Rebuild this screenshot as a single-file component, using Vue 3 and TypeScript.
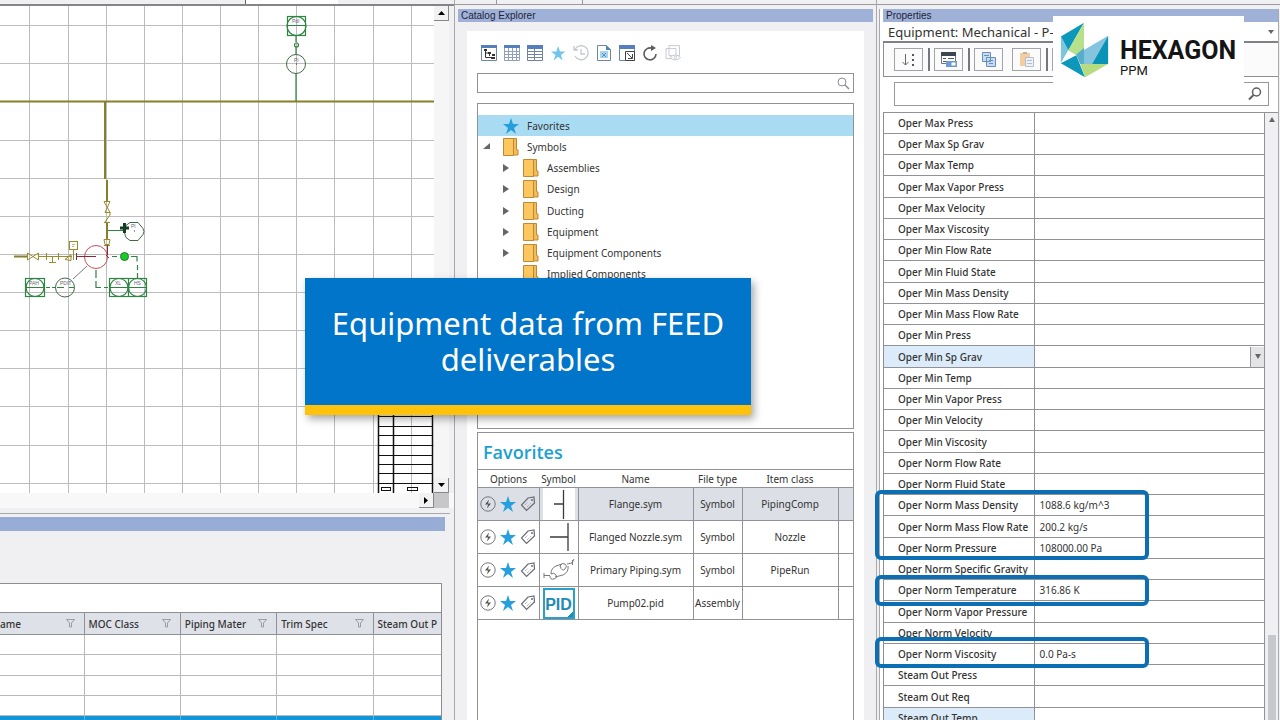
<script setup lang="ts">
interface PropertyRow {
  name: string
  value?: string
  state?: 'active' | 'tinted'
}

interface FavoriteRow {
  name: string
  type: string
  itemClass: string
  glyph: 'flange' | 'nozzle' | 'pipe' | 'pid'
}

const properties: PropertyRow[] = [
  { name: 'Oper Max Press' },
  { name: 'Oper Max Sp Grav' },
  { name: 'Oper Max Temp' },
  { name: 'Oper Max Vapor Press' },
  { name: 'Oper Max Velocity' },
  { name: 'Oper Max Viscosity' },
  { name: 'Oper Min Flow Rate' },
  { name: 'Oper Min Fluid State' },
  { name: 'Oper Min Mass Density' },
  { name: 'Oper Min Mass Flow Rate' },
  { name: 'Oper Min Press' },
  { name: 'Oper Min Sp Grav', state: 'active' },
  { name: 'Oper Min Temp' },
  { name: 'Oper Min Vapor Press' },
  { name: 'Oper Min Velocity' },
  { name: 'Oper Min Viscosity' },
  { name: 'Oper Norm Flow Rate' },
  { name: 'Oper Norm Fluid State' },
  { name: 'Oper Norm Mass Density', value: '1088.6 kg/m^3' },
  { name: 'Oper Norm Mass Flow Rate', value: '200.2 kg/s' },
  { name: 'Oper Norm Pressure', value: '108000.00 Pa' },
  { name: 'Oper Norm Specific Gravity' },
  { name: 'Oper Norm Temperature', value: '316.86 K' },
  { name: 'Oper Norm Vapor Pressure' },
  { name: 'Oper Norm Velocity' },
  { name: 'Oper Norm Viscosity', value: '0.0 Pa-s' },
  { name: 'Steam Out Press' },
  { name: 'Steam Out Req' },
  { name: 'Steam Out Temp', state: 'tinted' },
]

const folders = ['Assemblies', 'Design', 'Ducting', 'Equipment', 'Equipment Components', 'Implied Components']

const favorites: FavoriteRow[] = [
  { name: 'Flange.sym', type: 'Symbol', itemClass: 'PipingComp', glyph: 'flange' },
  { name: 'Flanged Nozzle.sym', type: 'Symbol', itemClass: 'Nozzle', glyph: 'nozzle' },
  { name: 'Primary Piping.sym', type: 'Symbol', itemClass: 'PipeRun', glyph: 'pipe' },
  { name: 'Pump02.pid', type: 'Assembly', itemClass: '', glyph: 'pid' },
]

const gridColumns = ['ame', 'MOC Class', 'Piping Mater', 'Trim Spec', 'Steam Out P']
const gridX = [29, 68, 106, 144, 182, 220, 258, 296, 334, 373, 411]
const gridY = [26, 64, 141, 179, 217, 255, 293, 331, 369, 407, 446, 484]
const titleBlockY = [417, 427, 436, 446, 456, 465, 474, 484]
const starPath = 'M8 0l2 6h6l-5 4 2 6-5-4-5 4 2-6-5-4h6z'
</script>

<template>
  <div class="app">
    <main class="workspace">
      <section class="left">
        <div class="strip left-strip"><span class="strip-tab"></span></div>
        <div class="drawing">
          <svg class="canvas" viewBox="0 6 434 487" preserveAspectRatio="xMinYMin slice" role="img" aria-label="Piping diagram">
            <rect y="6" width="434" height="487" fill="#fff" />
            <g stroke="#bdbdbd" stroke-width="1">
              <line v-for="x in gridX" :key="'x' + x" :x1="x + 0.5" :x2="x + 0.5" y1="6" y2="493" />
              <line v-for="y in gridY" :key="'y' + y" x1="0" x2="434" :y1="y - 0.5" :y2="y - 0.5" />
            </g>
            <g stroke="#85802a" stroke-width="2" fill="none">
              <path d="M0 101.500H434M105 102V179M107 180V201M107 223V239M14 256.500H27" />
            </g>
            <g stroke="#9a8b2c" stroke-width="1" fill="none">
              <path d="M104 201.500h6l-5 11h5zM110 212v3l-5 7M104 222.500h6M104 239.500h6l-1 5h-4zM104 245.500h6" />
              <path d="M27.500 253l11 7v-7l-11 7zM39 256.500h7M46.500 253v7M46 256.500h12M52.500 257v5M49 262.500h7M58.500 253v7M59 256.500h13M65 259.500l6-5v6zM73.500 249v11" />
              <rect x="69.500" y="241.500" width="8" height="8" />
              <path d="M72 244.500h3M72 246.500h2" stroke-width=".6" />
            </g>
            <g stroke="#c0505a" fill="none">
              <circle cx="96" cy="257" r="11.500" />
              <path d="M76.500 253v7M76 256.500h20M107.500 245v10M106 255l3 3" stroke="#8d2638" />
            </g>
            <g stroke="#2f8443" fill="none" stroke-width="1.200">
              <rect x="287.500" y="16.500" width="18" height="19" />
              <circle cx="296.500" cy="26" r="9.500" />
              <path d="M287 25.500h19M296 35v7M296 47v7M296 73v28" />
              <circle cx="296.500" cy="45" r="2" />
              <circle cx="296" cy="64" r="9.500" stroke="#426a4a" stroke-width="1" />
              <rect x="25.500" y="278.500" width="19" height="18" />
              <circle cx="35" cy="287.500" r="9" />
              <circle cx="65" cy="287.500" r="9.500" stroke="#426a4a" stroke-width="1" />
              <path d="M26 287.500h18M46 287.500h4M52 287.500h4M57 287.500h7M69 287.500h5" />
              <path d="M73 279l14-13" stroke-width=".8" stroke="#555" />
              <path d="M96 270v8M96 281v6.500h5M104 287.500h4M112 256.500h5M131 256.500h6v5M137.500 265v5M137.500 273v5" />
              <rect x="109.500" y="278.500" width="37" height="18" />
              <circle cx="119" cy="287.500" r="9" />
              <circle cx="137.500" cy="287.500" r="9" />
              <path d="M128.500 278v18M110 287.500h37M108 230.500h16" />
              <path d="M124 231.500l2-6 4-3h8l5 6 1 3-1 3-5 6h-8l-4-3z" stroke="#426a4a" stroke-width="1" />
            </g>
            <circle cx="124.500" cy="256.500" r="4" fill="#19cb29" stroke="#1f7d2a" />
            <path d="M124.500 223v10M120 228h9" stroke="#143d24" stroke-width="3" />
            <path d="M296 64h1M134 231h1" stroke="#333" />
            <g class="tag-text">
              <text x="292" y="23">PdI</text><text x="294" y="62">PI</text>
              <text x="29" y="285">PAH</text><text x="60" y="285">PDIT</text>
              <text x="115" y="285">XL</text><text x="134" y="285">HS</text><text x="131" y="228">PI</text>
            </g>
            <g stroke="#111" stroke-width="1" fill="none">
              <path d="M378.500 410V493M393.500 410V493M432.500 410V493" stroke-width="1.500" />
              <line v-for="y in titleBlockY" :key="y" x1="378" x2="433" :y1="y - 0.5" :y2="y - 0.5" />
              <rect x="381.500" y="487.500" width="9" height="3" />
              <rect x="407.500" y="487.500" width="10" height="3" />
            </g>
          </svg>
          <div class="vscroll">
            <button class="sb" aria-label="Scroll up"><svg width="7" height="4"><path d="M0 4h7L3.500 0z" /></svg></button>
            <button class="sb" aria-label="Scroll down"><svg width="7" height="4"><path d="M0 0h7L3.500 4z" /></svg></button>
          </div>
        </div>
        <div class="hscroll">
          <button class="sb" aria-label="Scroll right"><svg width="4" height="7"><path d="M0 0v7l4-3.500z" /></svg></button>
          <span class="corner"></span>
        </div>
        <div class="editor">
          <div class="bar"></div>
          <div class="sheet">
            <div class="group-area"></div>
            <table>
              <thead>
                <tr>
                  <th v-for="(c, i) in gridColumns" :key="c">
                    <div class="th-in">
                      <span>{{ c }}</span>
                      <svg v-if="i < 4" width="9" height="9" viewBox="0 0 9 9"><path d="M.500.500h8L5.500 4v4h-2V4z" fill="none" stroke="#9a9ca3" /></svg>
                    </div>
                  </th>
                </tr>
              </thead>
              <tbody>
                <tr v-for="r in 5" :key="r" :class="{ chosen: r === 5 }"><td v-for="c in gridColumns" :key="c"></td></tr>
              </tbody>
            </table>
          </div>
        </div>
      </section>

      <section class="catalog">
        <div class="strip catalog-strip"><span></span><span></span></div>
        <h2 class="title">Catalog Explorer</h2>
        <div class="catalog-body">
          <div class="tools">
            <button aria-label="Tree view"><svg viewBox="0 0 16 16"><path d="M.500.500h15v15H.500z" fill="#fff" stroke="#6b87ac" /><path d="M0 0h16v3H0z" fill="#5580bd" /><path d="M4.500 5v7.500H12M4.500 8H8M8.500 8v3" stroke="#333" fill="none" /><path d="M3 4h3v2H3zM7 7h3v2H7zM11 9h3v2h-3zM10 12h4v2h-4z" fill="#333" /></svg></button>
            <button aria-label="Grid view"><svg viewBox="0 0 16 16"><path d="M.500.500h15v15H.500zM0 6.500h16M0 9.500h16M0 12.500h16M4.500 3v13M8.500 3v13M12.500 3v13" fill="#fff" stroke="#8fa0b8" /><path d="M0 0h16v3H0z" fill="#5580bd" /></svg></button>
            <button aria-label="List view"><svg viewBox="0 0 16 16"><path d="M.500.500h15v15H.500zM0 6.500h16M0 9.500h16M0 12.500h16M7.500 3v13" fill="#fff" stroke="#718499" /><path d="M0 0h16v4H0z" fill="#5580bd" /></svg></button>
            <button aria-label="Favorites"><svg viewBox="0 0 16 16"><path :d="starPath" fill="#70c4ee" transform="translate(1 1) scale(.9)" /></svg></button>
            <button aria-label="Recent"><svg viewBox="0 0 16 16" fill="none" stroke="#c3c8ce" stroke-width="1.300"><path d="M2 4.500A7 7 0 1 1 2 11M1 1v4h4M8 4v5h4" /></svg></button>
            <button aria-label="Document"><svg viewBox="0 0 16 16"><path d="M1.500.500H10l4.500 4V15.500h-13z" fill="#fff" stroke="#6d879f" /><path d="M10 0v5h5z" fill="#4d88b5" /><path d="M4 6h8v7H4z" fill="#a7d4ef" /><path d="M6 8l4 4M10 8l-4 4" stroke="#5095c4" /></svg></button>
            <button aria-label="Dock window"><svg viewBox="0 0 16 16"><path d="M.500.500h15v15H.500z" fill="#fff" stroke="#6b87ac" /><path d="M0 0h16v4H0z" fill="#5580bd" /><path d="M6.500 6.500h9v9h-9z" fill="#fff" stroke="#444" /><path d="M8 8l5 5M13.500 9v4.500H9" stroke="#444" fill="none" /></svg></button>
            <button aria-label="Refresh"><svg viewBox="0 0 16 16"><path d="M10 3.200A6 6 0 1 0 14 9" fill="none" stroke="#5c5c5e" stroke-width="1.600" /><path d="M9 0l5 3-5 3z" fill="#5c5c5e" /></svg></button>
            <button aria-label="Preview"><svg viewBox="0 0 16 16" fill="#fff" stroke="#c6cad6"><path d="M4 .600h10.500v10H4zM1 3.600h10v10H1z" /><path d="M5 12.500q5.500-5 10.500 0-5 5-10.500 0z" /><circle cx="10.500" cy="12.500" r="1.300" /></svg></button>
          </div>
          <div class="search">
            <input type="text" aria-label="Search catalog" />
            <svg width="13" height="13" viewBox="0 0 13 13" fill="none" stroke="#8a8d92"><circle cx="5" cy="5" r="4" /><path d="M8 8l4 4" stroke-width="1.500" /></svg>
          </div>
          <ul class="tree">
            <li class="current">
              <span class="twist"></span>
              <svg class="folder" viewBox="0 0 16 16"><path :d="starPath" fill="#239fdb" /></svg>
              <span>Favorites</span>
            </li>
            <li>
              <button class="twist" aria-label="Collapse Symbols"><svg width="7" height="7"><path d="M7 0v6H0z" /></svg></button>
              <svg class="folder" viewBox="0 0 16 18"><path d="M.500.500h10v17H.500z" fill="#fcc75f" stroke="#bd8837" /><path d="M10.500.500h3v11l1.500.500v5h-4.500z" fill="#f5bc55" stroke="#bd8837" /></svg>
              <span>Symbols</span>
            </li>
            <li v-for="(f, i) in folders" :key="f" class="child">
              <button v-if="i < 5" class="twist" :aria-label="'Expand ' + f"><svg width="6" height="8"><path d="M0 0v8l6-4z" /></svg></button>
              <span v-else class="twist"></span>
              <svg class="folder" viewBox="0 0 16 18"><path d="M.500.500h10v17H.500z" fill="#fcc75f" stroke="#bd8837" /><path d="M10.500.500h3v11l1.500.500v5h-4.500z" fill="#f5bc55" stroke="#bd8837" /></svg>
              <span>{{ f }}</span>
            </li>
          </ul>
          <div class="favorites">
            <h3>Favorites</h3>
            <table>
              <colgroup><col class="c1" /><col class="c2" /><col class="c3" /><col class="c4" /><col class="c5" /><col class="c6" /></colgroup>
              <thead>
                <tr><th>Options</th><th>Symbol</th><th>Name</th><th>File type</th><th>Item class</th><th></th></tr>
              </thead>
              <tbody>
                <tr v-for="(f, i) in favorites" :key="f.name" :class="{ picked: i === 0 }">
                  <td>
                    <div class="options">
                      <button :aria-label="'Run ' + f.name"><svg viewBox="0 0 16 16"><circle cx="8" cy="8" r="7.200" fill="none" stroke="#747880" /><path d="M9 3.500L5 8.500h3l-1 4 4-5H8z" fill="#555" /></svg></button>
                      <button :aria-label="'Unfavorite ' + f.name"><svg viewBox="0 0 16 16"><path :d="starPath" fill="#279fdf" /></svg></button>
                      <button :aria-label="'Tag ' + f.name"><svg viewBox="0 0 16 16"><path d="M8 2l6-1 .5 6-8 7.500L1.500 9z" fill="none" stroke="#696c72" stroke-width="1.200" /><circle cx="12" cy="4" r="1" fill="#696c72" /><path d="M5 9l3-3M7 11l4-4" stroke="#a98f94" stroke-dasharray="1 1" /></svg></button>
                    </div>
                  </td>
                  <td class="sym">
                    <div class="symbox" :class="f.glyph">
                      <svg v-if="f.glyph === 'flange'" viewBox="0 0 32 32" stroke="#3b3b3b" stroke-width="1.300"><path d="M11 16h9M20.500 2v29" /></svg>
                      <svg v-else-if="f.glyph === 'nozzle'" viewBox="0 0 32 32" stroke="#3b3b3b" stroke-width="1.300"><path d="M7 16h18M25 2v28" /></svg>
                      <svg v-else-if="f.glyph === 'pipe'" viewBox="0 0 32 32" fill="none" stroke="#77797d"><path d="M1 19v5M1 21.500h6M8 20q0-6 5-8l6-2M12 23l8-2q6-3 5-9M17 12q2-4 5-2t0 5-5-3M8 20q3-2 5 1t-2 4-4-3M24 10l5-1M29.500 6v5M29 9l2-4" /></svg>
                      <span v-else>PID</span>
                    </div>
                  </td>
                  <td>{{ f.name }}</td><td>{{ f.type }}</td><td>{{ f.itemClass }}</td><td></td>
                </tr>
              </tbody>
            </table>
          </div>
        </div>
      </section>

      <section class="props">
        <div class="strip"></div>
        <div class="props-body">
          <h2 class="title">Properties</h2>
          <div class="item-select">
            <select aria-label="Selected item"><option>Equipment: Mechanical - P-</option></select>
            <svg width="6" height="4"><path d="M0 0h6L3 4z" /></svg>
          </div>
          <div class="prop-tools">
            <button aria-label="Sort"><svg viewBox="0 0 16 16"><path d="M4.500 2v11M1.500 10l3 3 3-3" fill="none" stroke="#66686c" /><path d="M11 2h2v2h-2zM11 7h2v2h-2zM11 12h2v2h-2z" fill="#55575c" /></svg></button>
            <span class="sep"></span>
            <button aria-label="Categories"><svg viewBox="0 0 16 16"><path d="M.500.500h14v11H.500z" fill="#fff" stroke="#6c7480" /><path d="M0 0h15v4H0z" fill="#3e4650" /><path d="M2 6.500h3M7 6.500h6M2 9.500h3" stroke="#555" /><path d="M5 9h11v6H5z" fill="#6c9bd4" /><path d="M10.500 10.500h4v3h-4z" fill="#fff" /></svg></button>
            <span class="sep"></span>
            <button aria-label="Copy"><svg viewBox="0 0 16 16" fill="#c6dcf2" stroke="#6b8eb8"><path d="M1.500.500h8v9h-8zM5.500 5.500h9v9h-9z" /><path d="M3 3.500h5M8 8.500h4M8 11.500h4" /></svg></button>
            <button aria-label="Paste"><svg viewBox="0 0 16 16"><path d="M1 1h10v13H1z" fill="#f6cda0" /><path d="M4 0h4v2H4z" fill="#b7b2ac" /><path d="M6.500 5.500h8v9h-8z" fill="#edf2f8" stroke="#b3bfcc" /><path d="M8 8.500h5M8 11.500h5" stroke="#b3bfcc" /></svg></button>
            <span class="sep"></span>
            <button aria-label="More"></button>
          </div>
          <div class="prop-search">
            <input type="text" aria-label="Search properties" />
            <svg width="14" height="14" viewBox="0 0 14 14" fill="none" stroke="#5c6064" stroke-width="1.500"><circle cx="8.500" cy="5" r="4" /><path d="M5.500 8L1 12.500" stroke-width="2" /></svg>
          </div>
          <div class="prop-list">
            <table>
              <colgroup><col class="pn" /><col /></colgroup>
              <tbody>
                <tr v-for="p in properties" :key="p.name" :class="p.state">
                  <th scope="row">{{ p.name }}</th>
                  <td>
                    <div class="val">
                      <span>{{ p.value }}</span>
                      <button v-if="p.state === 'active'" :aria-label="'Choose ' + p.name"><svg width="6" height="5"><path d="M0 0h6L3 5z" /></svg></button>
                    </div>
                  </td>
                </tr>
              </tbody>
            </table>
            <div class="prop-scroll">
              <svg width="6" height="5"><path d="M0 5h6L3 0z" /></svg>
              <span></span>
            </div>
          </div>
        </div>
        <div class="mark mark-a"></div>
        <div class="mark mark-b"></div>
        <div class="mark mark-c"></div>
        <div class="brand">
          <svg width="49" height="56" viewBox="22 25 145 167">
            <path d="M93 27L24 68l22 42z" fill="#0d97ba" />
            <path d="M24 68v80l22-38z" fill="#7cc5dc" />
            <path d="M93 27L46 110l24 14 23-22z" fill="#b7e08a" />
            <path d="M46 110L24 148l46-24z" fill="#fff" />
            <path d="M24 148l46-24 26 66z" fill="#0d97ba" />
            <path d="M165 66L70 122l12 28h35z" fill="#84c4de" />
            <path d="M165 66v84h-48z" fill="#0993b7" />
            <path d="M82 150h83l-69 40z" fill="#b5dc80" />
            <path d="M93 102v48H82l-12-28z" fill="#55aecb" />
          </svg>
          <div class="brand-text"><strong>HEXAGON</strong><span>PPM</span></div>
        </div>
      </section>
    </main>
    <aside class="callout">Equipment data from FEED deliverables</aside>
  </div>
</template>

<style>
html,
body {
  margin: 0;
  overflow: hidden;
}
</style>

<style scoped>
* {
  box-sizing: border-box;
}
.app {
  position: relative;
  height: 100vh;
  overflow: hidden;
  background: #f0eff1;
  color: #333;
  font: 10px/16px "Noto Sans", "Open Sans", sans-serif;
}
button,
input,
select {
  font: inherit;
  color: inherit;
  margin: 0;
  padding: 0;
}
button {
  border: 0;
  background: none;
  display: flex;
  align-items: center;
  justify-content: center;
}
h2,
h3,
ul {
  margin: 0;
  padding: 0;
}
table {
  border-collapse: collapse;
  table-layout: fixed;
  width: 100%;
}
th,
td {
  padding: 0;
}
.workspace {
  display: grid;
  grid-template-columns: minmax(0, 455fr) minmax(0, 422fr) minmax(0, 403fr);
  height: 100%;
}
section {
  display: flex;
  flex-direction: column;
  min-height: 0;
}
.strip {
  height: 5px;
  flex: none;
  border-bottom: 1px solid #9b9b9d;
}
.title {
  height: 13px;
  flex: none;
  padding-left: 3px;
  background: #9fb1d7;
  color: #1d2438;
  font: 10px/13px "Liberation Sans", Arial, sans-serif;
}

/* Drawing and editor */
.left {
  border-right: 1px solid #a9a9ac;
}
.left-strip {
  height: 6px;
  border-bottom: 2px solid #858587;
}
.strip-tab {
  display: block;
  width: 93px;
  height: 4px;
  margin-left: 54%;
  border-left: 1px solid #666;
  background: #fff;
}
.drawing {
  display: flex;
  height: 487px;
  padding-right: 5px;
}
.canvas {
  flex: 1;
  min-width: 0;
  height: 100%;
}
.tag-text {
  font: 5px "Liberation Sans", sans-serif;
  fill: #667;
}
.vscroll {
  width: 15px;
  display: flex;
  flex-direction: column;
  justify-content: space-between;
  background: #f6f6f7;
}
.sb {
  width: 15px;
  height: 15px;
  background: #f2f2f3;
  border-right: 1px solid #888;
  border-bottom: 1px solid #888;
}
.hscroll {
  display: flex;
  justify-content: flex-end;
  height: 15px;
  padding-right: 5px;
  background: #f8f8f8;
}
.corner {
  width: 15px;
  background: #c7c6c8;
}
.editor {
  flex: 1;
  display: flex;
  flex-direction: column;
  min-height: 0;
  margin: 5px 4px 0 0;
  padding-top: 3px;
  border-top: 1px solid #a9a9ac;
}
.bar {
  height: 14px;
  flex: none;
  margin-right: 5px;
  background: #98add5;
}
.sheet {
  flex: 1;
  margin: 52px 8px 0 0;
  border: solid #8c8d91;
  border-width: 1px 1px 0 0;
  background: #fff;
  overflow: hidden;
}
.group-area {
  height: 28px;
}
.sheet th {
  height: 22px;
  border: 1px solid #8f9197;
  border-left: 0;
  background: #dfe1e8;
  font-weight: 500;
  text-align: left;
}
.sheet th:first-child {
  width: 84px;
}
.sheet th:last-child {
  width: 68px;
  border-right: 0;
}
.th-in {
  display: flex;
  align-items: center;
  justify-content: space-between;
  padding: 0 9px 0 4px;
  white-space: nowrap;
}
.sheet th:first-child .th-in {
  padding-left: 0;
}
.sheet th:last-child .th-in {
  padding-right: 0;
}
.sheet td {
  height: 20px;
  border: 1px solid #b9b9bb;
  border-left: 0;
}
.sheet tr:nth-child(2) td {
  height: 21px;
}
.sheet td:last-child {
  border-right: 0;
}
.sheet .chosen td {
  background: #1296d8;
  border-color: #57b5e3;
}

/* Catalog explorer */
.catalog {
  border-right: 1px solid #a9a9ac;
}
.catalog-strip {
  display: flex;
}
.catalog-strip span {
  width: 42px;
  border-right: 1px solid #999;
}
.catalog-strip span + span {
  width: 86px;
}
.catalog .title {
  margin: 4px 3px 0 3px;
}
.catalog-body {
  flex: 1;
  display: flex;
  flex-direction: column;
  min-height: 0;
  margin: 9px 12px 0;
  padding: 14px 10px 0;
  background: #fff;
}
.tools {
  display: flex;
  gap: 7px;
  padding-left: 4px;
}
.tools button,
.tools svg {
  width: 16px;
  height: 16px;
}
.search {
  display: flex;
  align-items: center;
  height: 20px;
  margin-top: 12px;
  padding-right: 3px;
  border: 1px solid #909297;
}
.search input,
.prop-search input {
  flex: 1;
  min-width: 0;
  border: 0;
  outline: 0;
  background: none;
}
.tree {
  height: 326px;
  margin-top: 10px;
  padding-top: 11px;
  border: 1px solid #909297;
  list-style: none;
}
.tree li {
  display: flex;
  align-items: center;
  height: 21px;
}
.tree li:nth-child(4n) {
  height: 22px;
}
.tree .current {
  background: #a9dcf3;
}
.twist {
  width: 16px;
  height: 16px;
}
.twist svg {
  fill: #666;
}
.folder {
  width: 16px;
  height: 18px;
  margin: 0 8px 0 9px;
}
.child {
  padding-left: 20px;
}
.favorites {
  flex: 1;
  margin-top: 3px;
  border: solid #909297;
  border-width: 1px 1px 0;
}
.favorites h3 {
  height: 36px;
  padding-left: 5px;
  color: #1b9fd3;
  font: 600 18px/38px "Open Sans", sans-serif;
}
.c1 { width: 61px; }
.c2 { width: 39px; }
.c4 { width: 49px; }
.c5 { width: 96px; }
.c6 { width: 15px; }
.favorites th,
.favorites td {
  border: 1px solid #909297;
  text-align: center;
  white-space: nowrap;
}
.favorites th {
  height: 18px;
  font-weight: 400;
  border-left: 0;
  border-right: 0;
}
.favorites td {
  height: 33px;
}
.favorites tr > :first-child {
  border-left: 0;
}
.favorites tr > :last-child {
  border-right: 0;
}
.picked {
  background: #dcdfe6;
}
.options {
  display: flex;
  justify-content: space-between;
  padding: 0 3px 0 2px;
}
.options button,
.options svg {
  width: 16px;
  height: 16px;
}
.symbox {
  width: 32px;
  height: 32px;
  margin: 0 auto;
  background: #fff;
}
.symbox svg {
  display: block;
  width: 32px;
  height: 32px;
}
.pid {
  height: 31px;
  border: 2px solid #2a9fc8;
  background: linear-gradient(135deg, #fff 90%, #178fbd 90%);
  color: #2389b5;
  font: 700 16px/29px "Liberation Sans", sans-serif;
}

/* Properties */
.props {
  position: relative;
}
.props-body {
  flex: 1;
  display: flex;
  flex-direction: column;
  min-height: 0;
  margin: 4px 1px 0 2px;
  padding-left: 3px;
  border-left: 1px solid #a9a9ac;
  border-right: 1px solid #a9a9ac;
  background: #fff;
}
.item-select {
  display: flex;
  align-items: center;
  height: 21px;
  flex: none;
  padding-right: 4px;
  border-bottom: 2px solid #7f8187;
}
.item-select select {
  appearance: none;
  flex: 1;
  padding: 0 5px;
  border: 0;
  outline: 0;
  background: #fff;
  font-size: 13px;
  line-height: 18px;
}
.item-select svg {
  fill: #666;
}
.prop-tools {
  display: flex;
  align-items: center;
  height: 34px;
  flex: none;
  padding-left: 10px;
  border-bottom: 1px solid #8c8e93;
  border-left: 1px solid #8c8e93;
  background: #fbfbfc;
}
.prop-tools button {
  width: 29px;
  height: 23px;
  border: 1px solid #a2a4a9;
}
.prop-tools button + button {
  margin-left: 9px;
}
.prop-tools svg {
  width: 16px;
  height: 16px;
}
.sep {
  width: 2px;
  height: 23px;
  margin: 0 4px 0 5px;
  background: #75777d;
}
.prop-search {
  display: flex;
  align-items: center;
  height: 24px;
  flex: none;
  margin: 5px 9px 6px 11px;
  padding-right: 6px;
  border: 1px solid #96989d;
}
.prop-list {
  display: flex;
  flex: 1;
  min-height: 0;
  overflow: hidden;
  border-left: 1px solid #8c8e93;
}
.prop-list table {
  flex: 1;
}
.pn {
  width: 150px;
}
.prop-list th,
.prop-list td {
  height: 21px;
  border: 1px solid #909298;
  border-left: 0;
}
.prop-list tr:nth-child(4n) th {
  height: 22px;
}
.prop-list th {
  padding-left: 14px;
  font-weight: 500;
  text-align: left;
  white-space: nowrap;
}
.active th,
.tinted th {
  background: #dcebfa;
}
.val {
  display: flex;
  justify-content: space-between;
  padding-left: 5px;
}
.val button {
  width: 14px;
  height: 20px;
  margin: -2px 0;
  border-left: 1px solid #999;
  background: #e4e4e6;
}
.val svg,
.prop-scroll svg {
  fill: #666;
}
.prop-scroll {
  display: flex;
  flex-direction: column;
  align-items: center;
  justify-content: space-between;
  width: 13px;
  padding-top: 4px;
  border-top: 1px solid #909298;
  background: #f0f0f2;
}
.prop-scroll span {
  width: 8px;
  height: 85px;
  background: #c6c8cc;
}
.mark {
  position: absolute;
  left: -2px;
  width: 274px;
  height: 31px;
  border: 4px solid #0c6fb3;
  border-radius: 6px;
}
.mark-a {
  top: 490px;
  height: 70px;
}
.mark-b {
  top: 575px;
}
.mark-c {
  top: 637px;
}
.brand {
  position: absolute;
  top: 16px;
  right: 36px;
  display: flex;
  width: 191px;
  height: 69px;
  padding: 6px 0 0 7px;
  background: #fff;
}
.brand-text {
  display: flex;
  flex-direction: column;
  padding: 15px 0 0 11px;
  color: #151515;
}
.brand-text strong {
  font: 700 25px/28px Roboto, sans-serif;
}
.brand-text span {
  font: 13px/15px Roboto, sans-serif;
  margin-top: -2px;
}
.callout {
  position: absolute;
  top: 278px;
  left: 305px;
  width: 446px;
  height: 137px;
  padding: 27px 20px 0;
  border-bottom: 10px solid #ffc20a;
  background: #0075c9;
  box-shadow: 3px 4px 8px rgb(0 0 0 / 35%);
  color: #fff;
  font: 31px/36px "Noto Sans", sans-serif;
  text-align: center;
}
</style>
